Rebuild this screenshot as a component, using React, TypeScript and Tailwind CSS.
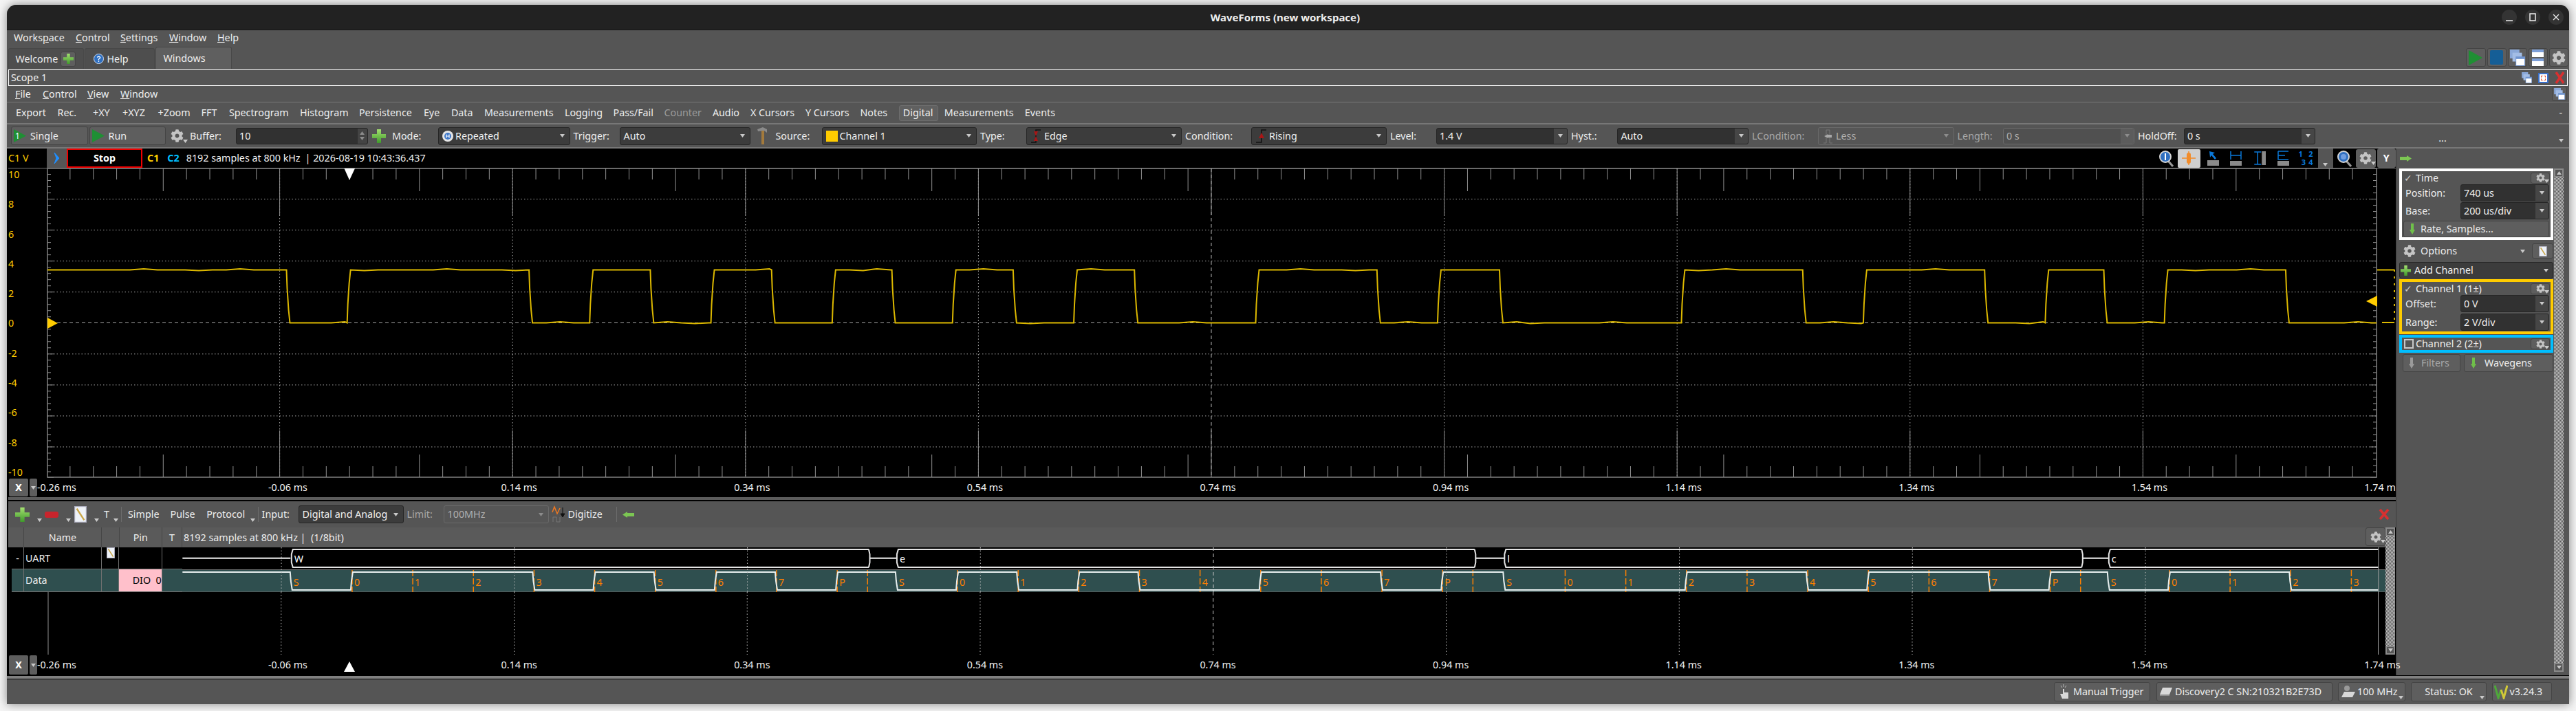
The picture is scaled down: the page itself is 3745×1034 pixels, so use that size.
import React from 'react';
import { FaCog } from 'react-icons/fa';

const BIT = 88.15;
const HIGH = 832;
const LOW = 858;
const A_HIGH = 392.5;
const A_LOW = 469.5;

const frames = [
  { ch: 'W', start: 423.5, end: 1262.7, bits: '111010101' },
  { ch: 'e', start: 1303.6, end: 2143.5, bits: '101001101' },
  { ch: 'l', start: 2187, end: 3026, bits: '001101101' },
  { ch: 'c', start: 3065.5, end: 3700, bits: '1100' },
];

// level changes of the serial line, shared by the analog trace and the digital row
const changes: { x: number; up: boolean }[] = [];
{
  let level = '1';
  frames.forEach((f) => {
    changes.push({ x: f.start, up: false });
    level = '0';
    f.bits.split('').forEach((b, i) => {
      if (b !== level) changes.push({ x: f.start + BIT * (i + 1), up: b === '1' });
      level = b;
    });
    if (level === '0') {
      level = '1';
    }
  });
}

const digitalPoints = () => {
  const pts: string[] = ['265,' + HIGH];
  changes.forEach((c) => {
    const a = c.up ? LOW : HIGH;
    const b = c.up ? HIGH : LOW;
    pts.push(`${c.x - 2},${a}`, `${c.x - 1},${(a + b) / 2}`, `${c.x + 1},${b}`);
  });
  pts.push(`3457.5,${LOW}`);
  return pts.join(' ');
};

const analogPoints = () => {
  const pts: string[] = [];
  let x = 69;
  let y = A_HIGH;
  let n = 0;
  const flat = (to: number) => {
    while (x < to - 20) {
      x += 20;
      n++;
      const bump = n % 7 === 0 ? -1.5 : n % 11 === 0 ? 1 : 0;
      pts.push(`${x},${y + bump}`);
    }
  };
  pts.push(`${x},${y}`);
  changes.forEach((c) => {
    flat(c.x - 7);
    const a = c.up ? A_LOW : A_HIGH;
    const b = c.up ? A_HIGH : A_LOW;
    pts.push(`${c.x - 7},${a}`, `${c.x - 6},${a + (b - a) * 0.35}`, `${c.x - 4},${a + (b - a) * 0.75}`, `${c.x - 2},${b}`);
    x = c.x - 2;
    y = b;
  });
  flat(3455);
  pts.push(`3455,${y}`);
  return pts.join(' ');
};

const bitTicks = frames.flatMap((f) => {
  const labels = f.bits.length === 9 ? ['S', '0', '1', '2', '3', '4', '5', '6', '7', 'P'] : ['S', '0', '1', '2', '3'];
  return labels.map((label, i) => ({ label, x: f.start + BIT * i, tick: label !== 'S' }));
});
const stopTicks = frames.slice(0, 3).map((f) => f.start + BIT * 9.5);

const majorsTop = Array.from({ length: 11 }, (_, i) => 68 + 338.6 * i);
const majorsLow = Array.from({ length: 11 }, (_, i) => 70 + 338.75 * i);

const Gear = ({ size = 18, arrow = false }: { size?: number; arrow?: boolean }) => (
  <span className="relative inline-flex shrink-0 items-center justify-center">
    <FaCog size={size} color="#c4c4c4" />
    {arrow && <Arrow className="absolute -bottom-[1px] -right-[6px]" />}
  </span>
);

const Arrow = ({ className = '', dim = false }: { className?: string; dim?: boolean }) => (
  <svg width="7" height="5" viewBox="0 0 7 5" className={`shrink-0 ${className}`}>
    <path d="M0 0 L7 0 L3.5 5 Z" fill={dim ? '#8c8c8c' : '#c8c8c8'} />
  </svg>
);

const Plus = ({ size = 20 }: { size?: number }) => (
  <svg width={size} height={size} viewBox="0 0 20 20" className="shrink-0">
    <defs>
      <linearGradient id="plusg" x1="0" y1="0" x2="0" y2="1">
        <stop offset="0" stopColor="#a4e070" />
        <stop offset="1" stopColor="#3f9a2b" />
      </linearGradient>
    </defs>
    <path d="M7 0 H13 V7 H20 V13 H13 V20 H7 V13 H0 V7 H7 Z" fill="url(#plusg)" />
  </svg>
);

const Play = ({ w = 18, h = 19 }: { w?: number; h?: number }) => (
  <svg width={w} height={h} viewBox="0 0 18 19" className="shrink-0" preserveAspectRatio="none">
    <path d="M0 0 L18 9.5 L0 19 Z" fill="#1f8f34" />
  </svg>
);

const DownArrow = ({ dim = false }: { dim?: boolean }) => (
  <svg width="8" height="16" viewBox="0 0 8 16" className="shrink-0">
    <path d="M2 0 H6 V9 H8 L4 16 L0 9 H2 Z" fill={dim ? '#9a9a9a' : '#6fbf4a'} />
  </svg>
);

const SideArrow = ({ left = false }: { left?: boolean }) => (
  <svg width="18" height="9" viewBox="0 0 18 9" className={`shrink-0 ${left ? 'rotate-180' : ''}`}>
    <path d="M1 2 H11 V0 L18 4.5 L11 9 V7 H1 Z" fill="#7cc653" />
  </svg>
);

const Windows = ({ w = 16, h = 18 }: { w?: number; h?: number }) => (
  <svg width={w} height={h} viewBox="0 0 24 26" className="shrink-0">
    <rect x="0" y="0" width="15" height="14" fill="#8aa8d8" />
    <rect x="4" y="5" width="15" height="14" fill="#a3bde5" />
    <rect x="9" y="11" width="15" height="15" fill="#6f94cf" />
    <rect x="10" y="15" width="13" height="10" fill="#fff" />
  </svg>
);

const Doc = ({ w = 15, h = 20 }: { w?: number; h?: number }) => (
  <svg width={w} height={h} viewBox="0 0 15 20" className="shrink-0">
    <rect x="0.5" y="0.5" width="14" height="19" fill="#eef2f8" stroke="#aab" />
    <path d="M3 3 L12 17" stroke="#c9a64a" strokeWidth="2" />
  </svg>
);

const Mag = ({ digit = false }: { digit?: boolean }) => (
  <svg width="21" height="25" viewBox="0 0 21 25" className="shrink-0">
    <path d="M13 16 L20 24" stroke="#9a9a9a" strokeWidth="3" />
    <circle cx="9" cy="10" r="8" fill="#2f6fc0" stroke="#d5d5d5" strokeWidth="2" />
    {digit ? <path d="M9 5 V15" stroke="#fff" strokeWidth="2" /> : <circle cx="9" cy="10" r="4" fill="#6f9de0" />}
  </svg>
);

const Mn = ({ a = '', u, b = '' }: { a?: string; u: string; b?: string }) => (
  <span>
    {a}
    <span className="underline">{u}</span>
    {b}
  </span>
);

const Label = ({ children, className = '', dim = false }: { children: React.ReactNode; className?: string; dim?: boolean }) => (
  <div className={`shrink-0 pl-[5px] ${dim ? 'text-[#a8a8a8]' : 'text-[#eeeeee]'} ${className}`}>{children}</div>
);

const Field = ({ value, className = '', dim = false, spin = false }: { value: string; className?: string; dim?: boolean; spin?: boolean }) => (
  <div className={`flex h-[24px] shrink-0 items-stretch overflow-hidden rounded-[3px] border ${dim ? 'border-[#6a6a6a] bg-[#505050] text-[#b0b0b0]' : 'border-[#262626] bg-[#313131] text-[#f0f0f0]'} ${className}`}>
    <div className="flex flex-1 items-center pl-[4px]">{value}</div>
    {spin ? (
      <div className="flex w-[14px] flex-col items-center justify-center gap-[3px] bg-[#444444]">
        <Arrow className="rotate-180" dim />
        <Arrow dim />
      </div>
    ) : (
      <div className={`flex w-[19px] items-center justify-center ${dim ? 'bg-[#5c5c5c]' : 'bg-[#464646]'}`}>
        <Arrow dim={dim} />
      </div>
    )}
  </div>
);

const Select = ({ value, icon, className = '', dim = false }: { value: string; icon?: React.ReactNode; className?: string; dim?: boolean }) => (
  <div className={`flex h-[26px] shrink-0 items-center gap-[3px] rounded-[3px] border pl-[5px] pr-[7px] ${dim ? 'border-[#6a6a6a] bg-[#565656] text-[#b0b0b0]' : 'border-[#262626] bg-[#3c3c3c] text-[#f0f0f0]'} ${className}`}>
    {icon}
    <span className="flex-1 whitespace-nowrap">{value}</span>
    <Arrow dim={dim} />
  </div>
);

const Btn = ({ children, className = '' }: { children?: React.ReactNode; className?: string }) => (
  <div className={`flex shrink-0 items-center rounded-[3px] border border-[#444444] bg-[#5e5e5e] ${className}`}>{children}</div>
);

const Scrollbar = ({ className = '' }: { className?: string }) => (
  <div className={`flex w-[14px] shrink-0 flex-col ${className}`}>
    <div className="flex h-[13px] items-center justify-center border-2 border-[#8a8a8a] bg-[#555555]">
      <Arrow className="rotate-180" />
    </div>
    <div className="flex-1 bg-[repeating-conic-gradient(#cccccc_0%_25%,#555555_0%_50%)] bg-[length:2px_2px]" />
    <div className="flex h-[13px] items-center justify-center border-2 border-[#8a8a8a] bg-[#555555]">
      <Arrow />
    </div>
  </div>
);

const TimeAxis = () => {
  const labels = ['0.14 ms', '0.34 ms', '0.54 ms', '0.74 ms', '0.94 ms', '1.14 ms', '1.34 ms', '1.54 ms', '1.74 ms'];
  return (
    <div className="flex flex-1 items-center overflow-hidden whitespace-nowrap text-[#f2f2f2]">
      <div className="w-[336px] shrink-0">-0.26 ms</div>
      <div className="w-[338.6px] shrink-0">-0.06 ms</div>
      {labels.map((l) => (
        <div key={l} className="w-[338.6px] shrink-0">
          {l}
        </div>
      ))}
    </div>
  );
};

const XButton = () => (
  <div className="flex w-[42px] shrink-0 items-stretch self-stretch py-[1px] pl-[1px]">
    <div className="flex w-[28px] items-center justify-center rounded-[2px] bg-[#5e5e5e] font-bold text-white">X</div>
    <div className="ml-[2px] flex w-[11px] items-center justify-center rounded-[2px] bg-[#5e5e5e]">
      <Arrow />
    </div>
  </div>
);

const Plot = () => {
  const yTicks = Array.from({ length: 51 }, (_, i) => 244.5 + 9.01 * i);
  const smallX = Array.from({ length: 101 }, (_, i) => 68 + 33.86 * i).filter((_, i) => i % 10 !== 0);
  return (
    <svg viewBox="68 245 3416 450" className="h-[450px] w-[3416px] shrink-0">
      <path d="M69 245 H3455 V694 H69 Z" fill="none" stroke="#808080" strokeWidth="1.5" />
      {[1, 2, 3, 4, 6, 7, 8, 9].map((i) => (
        <line key={i} x1="69" x2="3455" y1={244.5 + 45.05 * i} y2={244.5 + 45.05 * i} stroke="#a8a8a8" strokeDasharray="1.5 3" />
      ))}
      <line x1="83" x2="3440" y1="469.5" y2="469.5" stroke="#a8a8a8" strokeDasharray="5 4" />
      {majorsTop.slice(1, 10).map((x, i) => (
        <g key={x}>
          <line x1={x} x2={x} y1="245" y2="694" stroke="#b0b0b0" strokeDasharray={i === 4 ? '5 4' : '1.5 3'} />
          <line x1={x} x2={x} y1="245" y2="313" stroke="#909090" />
          <line x1={x} x2={x} y1="626" y2="694" stroke="#909090" />
        </g>
      ))}
      {smallX.map((x, i) => {
        const len = (i + 1) % 10 === 5 ? 33 : 16;
        return (
          <g key={x} stroke="#909090">
            <line x1={x} x2={x} y1="245" y2={245 + len} />
            <line x1={x} x2={x} y1="694" y2={694 - len} />
          </g>
        );
      })}
      {yTicks.map((y, i) => (
        <g key={y} stroke="#909090">
          <line x1="69" x2={i % 5 === 0 ? 78 : 74} y1={y} y2={y} />
          <line x1="3455" x2={i % 5 === 0 ? 3446 : 3450} y1={y} y2={y} />
        </g>
      ))}
      <polyline points={analogPoints()} fill="none" stroke="#dcb800" strokeWidth="2" />
      <path d="M3456 392.5 H3481 M3463 469 H3481" stroke="#dcb800" strokeWidth="2" fill="none" />
      <line x1="3481" x2="3481" y1="392" y2="470" stroke="#dcb800" strokeWidth="2" strokeDasharray="3 7" />
      <path d="M69 462 L84 470 L69 478 Z" fill="#ffcc00" />
      <path d="M3440 438 L3456 430 V446 Z" fill="#ffcc00" />
      <path d="M500.5 245 H516 L508 262 Z" fill="#ffffff" />
    </svg>
  );
};

const DigitalRows = () => (
  <svg viewBox="264.7 796 3203.3 65" className="h-[65px] w-[3203.3px] shrink-0">
    <rect x="264.7" y="828" width="3204" height="33" fill="#2f4f4f" />
    <path d="M264.7 828.5 H3468 M264.7 861 H3468" stroke="#707070" />
    <line x1="265" x2="422" y1="811.7" y2="811.7" stroke="#f0f0f0" strokeWidth="2" />
    {frames.map((f, i) => {
      const next = frames[i + 1];
      const end = Math.min(f.end, 3457.5);
      return (
        <g key={f.ch}>
          <path
            d={`M${end} 799 H${f.start + 2} L${f.start} 806 V818 L${f.start + 2} 825 H${end}${f.end < 3457 ? ` M${end} 799 L${end + 1.5} 806 V818 L${end} 825` : ''}`}
            fill="none"
            stroke="#e4e4e4"
            strokeWidth="2"
          />
          {next && <line x1={f.end + 1.5} x2={next.start} y1="811.7" y2="811.7" stroke="#f0f0f0" strokeWidth="2" />}
          <text x={f.start + 4} y="818" fontSize="14.3" fill="#ffffff">
            {f.ch}
          </text>
        </g>
      );
    })}
    {bitTicks.map((t) => (
      <g key={t.x}>
        {t.tick && <line x1={t.x} x2={t.x} y1="829" y2="861" stroke="#ff8000" strokeWidth="1.5" strokeDasharray="9 3" />}
        <text x={t.x + 3} y="852" fontSize="14.3" fill="#ff8000">
          {t.label}
        </text>
      </g>
    ))}
    {stopTicks.map((x) => (
      <line key={x} x1={x} x2={x} y1="829" y2="861" stroke="#ff8000" strokeWidth="1.5" strokeDasharray="9 3" />
    ))}
    <polyline points={digitalPoints()} fill="none" stroke="#e6eeee" strokeWidth="2" />
    {majorsLow.slice(1, 10).map((x, i) => (
      <line key={x} x1={x} x2={x} y1="796" y2="861" stroke="#c0c0c0" strokeDasharray={i === 4 ? '5 4' : '1.5 3'} />
    ))}
    <line x1="3457.5" x2="3457.5" y1="796" y2="861" stroke="#a0a0a0" />
  </svg>
);

const LowerCanvas = () => (
  <svg viewBox="12 861 3456 91" className="h-[91px] w-[3456px] shrink-0">
    <line x1="70" x2="70" y1="861" y2="952" stroke="#909090" />
    <line x1="3457.5" x2="3457.5" y1="861" y2="952" stroke="#a0a0a0" />
    {majorsLow.slice(1, 10).map((x, i) => (
      <line key={x} x1={x} x2={x} y1="861" y2="952" stroke="#c0c0c0" strokeDasharray={i === 4 ? '5 4' : '1.5 3'} />
    ))}
  </svg>
);

const TimeBoxRow = ({ label, value }: { label: string; value: string }) => (
  <div className="flex h-[25px] items-center">
    <div className="w-[85px] pl-[5px] text-[#eeeeee]">{label}</div>
    <Field value={value} className="!h-[25px] w-[129px]" />
  </div>
);

const BoxTitle = ({ children, checked = true, className = '' }: { children: React.ReactNode; checked?: boolean; className?: string }) => (
  <div className={`flex items-center ${className}`}>
    <div className="flex w-[20px] shrink-0 items-center pl-[3px] text-[#cccccc]">
      {checked ? '✓' : <div className="h-[14px] w-[14px] border-2 border-[#c8c8c8]" />}
    </div>
    <div className="flex-1 text-[#eeeeee]">{children}</div>
    <Btn className="mr-[1px] h-[16px] w-[28px] justify-center">
      <Gear size={13} arrow />
    </Btn>
  </div>
);

const Sidebar = () => (
  <div className="flex w-[250px] shrink-0 border-l border-[#3c3c3c] bg-[#555555]">
    <div className="flex w-[229px] shrink-0 flex-col pl-[4px]">
      <div className="flex h-[29px] items-center">
        <SideArrow />
      </div>
      <div className="flex h-[104px] w-[224px] flex-col border-4 border-white bg-[#555555]">
        <BoxTitle className="h-[19px]">Time</BoxTitle>
        <TimeBoxRow label="Position:" value="740 us" />
        <div className="mt-[1px]">
          <TimeBoxRow label="Base:" value="200 us/div" />
        </div>
        <Btn className="ml-[2px] mt-[2px] h-[24px] w-[212px] gap-[8px] pl-[8px] text-[#eeeeee]">
          <DownArrow />
          Rate, Samples...
        </Btn>
      </div>
      <div className="flex h-[32px] w-[224px] items-center pl-[6px] text-[#eeeeee]">
        <Gear size={18} />
        <span className="ml-[7px] flex-1">Options</span>
        <Arrow className="mr-[10px]" />
        <Btn className="h-[22px] w-[31px] justify-center">
          <Doc w={12} h={15} />
        </Btn>
      </div>
      <div className="flex h-[24px] w-[224px] items-center gap-[5px] rounded-[3px] border border-[#262626] bg-[#3c3c3c] pl-[1px] pr-[6px] text-[#f0f0f0]">
        <Plus size={15} />
        <span className="flex-1">Add Channel</span>
        <Arrow />
      </div>
      <div className="mt-[1px] flex h-[80px] w-[224px] flex-col border-4 border-[#ffcc00]">
        <BoxTitle className="h-[19px]">Channel 1 (1±)</BoxTitle>
        <TimeBoxRow label="Offset:" value="0 V" />
        <div className="mt-[2px]">
          <TimeBoxRow label="Range:" value="2 V/div" />
        </div>
      </div>
      <div className="mt-[1px] w-[224px] border-4 border-[#00bfff]">
        <BoxTitle checked={false} className="h-[18px]">
          Channel 2 (2±)
        </BoxTitle>
      </div>
      <div className="mt-[2px] flex w-[224px] items-center pl-[5px]">
        <Btn className="h-[26px] w-[84px] gap-[10px] pl-[8px] text-[#a8a8a8]">
          <DownArrow dim />
          Filters
        </Btn>
        <Btn className="ml-[5px] h-[26px] w-[130px] gap-[12px] pl-[9px] text-[#eeeeee]">
          <DownArrow />
          Wavegens
        </Btn>
      </div>
    </div>
    <div className="flex w-[21px] flex-col pb-[5px] pt-[29px]">
      <Scrollbar className="flex-1" />
    </div>
  </div>
);

const ScopeToolbar = () => {
  const items: [string, string][] = [
    ['Export', 'w-[60.5px]'],
    ['Rec.', 'w-[51.5px]'],
    ['+XY', 'w-[43px]'],
    ['+XYZ', 'w-[51.6px]'],
    ['+Zoom', 'w-[63px]'],
    ['FFT', 'w-[40.3px]'],
    ['Spectrogram', 'w-[103px]'],
    ['Histogram', 'w-[86px]'],
    ['Persistence', 'w-[94px]'],
    ['Eye', 'w-[40px]'],
    ['Data', 'w-[48px]'],
    ['Measurements', 'w-[117px]'],
    ['Logging', 'w-[70.6px]'],
    ['Pass/Fail', 'w-[74px]'],
    ['Counter', 'w-[70.4px] text-[#9a9a9a]'],
    ['Audio', 'w-[55px]'],
    ['X Cursors', 'w-[80px]'],
    ['Y Cursors', 'w-[79.6px]'],
    ['Notes', 'w-[56.4px]'],
  ];
  return (
    <div className="flex h-[32px] shrink-0 items-center border-b-2 border-[#777777] pl-[13px] text-[#eeeeee]">
      {items.map(([t, w]) => (
        <div key={t} className={`shrink-0 whitespace-nowrap ${w}`}>
          {t}
        </div>
      ))}
      <div className="flex h-[23px] w-[57px] shrink-0 items-center rounded-[3px] border border-[#6e6e6e] bg-[#606060] pl-[5px]">Digital</div>
      <div className="ml-[9px] w-[117px] shrink-0">Measurements</div>
      <div className="shrink-0">Events</div>
      <div className="flex-1" />
      <div className="mr-[10px]">-</div>
    </div>
  );
};

const ControlsRow = () => (
  <div className="flex h-[35px] shrink-0 items-center border-b-2 border-[#777777] pl-[6px] text-[#eeeeee]">
    <Btn className="h-[27px] w-[111.5px] pl-[3px]">
      <span className="relative flex items-center">
        <Play />
        <span className="absolute left-[2px] text-[12px] text-white">1</span>
      </span>
      <span className="ml-[6px]">Single</span>
    </Btn>
    <Btn className="ml-[2px] h-[27px] w-[111px] pl-[3px]">
      <Play />
      <span className="ml-[6px]">Run</span>
    </Btn>
    <div className="ml-[6.5px] flex w-[21px] shrink-0 justify-center">
      <Gear size={19} arrow />
    </div>
    <Label className="ml-[3px] w-[72px]">Buffer:</Label>
    <Field value="10" spin className="w-[191.5px]" />
    <div className="ml-[6.5px] shrink-0">
      <Plus size={20} />
    </div>
    <Label className="ml-[4px] w-[72px]">Mode:</Label>
    <Select
      className="w-[191.5px]"
      value="Repeated"
      icon={
        <svg width="16" height="16" viewBox="0 0 16 16" className="shrink-0">
          <circle cx="8" cy="8" r="8" fill="#e6e6e6" />
          <circle cx="8" cy="8" r="5" fill="#3f78c8" />
          <path d="M6 5.5 V10.5 M10 5.5 V10.5 M6 8 H10" stroke="#fff" strokeWidth="1.2" />
        </svg>
      }
    />
    <Label className="w-[72px]">Trigger:</Label>
    <Select className="w-[190.5px]" value="Auto" />
    <div className="ml-[8px] flex w-[17px] shrink-0 justify-center">
      <svg width="17" height="25" viewBox="0 0 17 25">
        <path d="M2 3 L10 0 L16 3 L16 8 L12 5 L3 6 Z" fill="#8a8a8a" />
        <rect x="8" y="5" width="4" height="20" fill="#a37a3c" />
      </svg>
    </div>
    <Label className="ml-[6.5px] w-[72px]">Source:</Label>
    <Select className="w-[225.5px]" value="Channel 1" icon={<span className="h-[16px] w-[17px] shrink-0 bg-[#ffcc00]" />} />
    <Label className="w-[72px]">Type:</Label>
    <Select
      className="w-[226px]"
      value="Edge"
      icon={
        <svg width="17" height="20" viewBox="0 0 17 20" className="shrink-0">
          <path d="M1 19 H8 V1 H15" stroke="#111" fill="none" strokeWidth="1.5" />
          <path d="M5 3 H11 L8 10 L11 17 H5 L8 10 Z" fill="#a81616" />
        </svg>
      }
    />
    <Label className="w-[101px]">Condition:</Label>
    <Select
      className="w-[197px]"
      value="Rising"
      icon={
        <svg width="17" height="20" viewBox="0 0 17 20" className="shrink-0">
          <path d="M1 19 H9 V1 H16" stroke="#111" fill="none" strokeWidth="1.5" />
          <path d="M9 5 L13 13 H5 Z" fill="#a81616" />
        </svg>
      }
    />
    <Label className="w-[72px]">Level:</Label>
    <Field value="1.4 V" className="w-[191px]" />
    <Label className="w-[72.4px]">Hyst.:</Label>
    <Field value="Auto" className="w-[190.6px]" />
    <Label dim className="w-[101px]">
      LCondition:
    </Label>
    <Select
      dim
      className="w-[197.6px]"
      value="Less"
      icon={
        <svg width="17" height="22" viewBox="0 0 17 22" className="shrink-0">
          <path d="M2 21 H6 V2 H11 V21 H15" stroke="#777" fill="none" />
          <path d="M3 11 L9 8 V14 Z M9 9 H14 V13 H9 Z" fill="#a8a8a8" />
        </svg>
      }
    />
    <Label dim className="w-[71.4px]">
      Length:
    </Label>
    <Field dim value="0 s" className="w-[191px]" />
    <Label className="w-[72px]">HoldOff:</Label>
    <Field value="0 s" className="w-[191px]" />
    <div className="flex-1 pl-[16px] pt-[6px] text-center">...</div>
    <Arrow className="mb-[-14px] mr-[8px]" />
  </div>
);

const ScopeHeader = () => (
  <div className="flex h-[29px] items-stretch border-b border-[#777777] bg-black">
    <div className="flex w-[56px] shrink-0 items-center text-[#ffcc00]">C1 V</div>
    <div className="flex w-[29px] shrink-0 items-center justify-center bg-[#555555]">
      <svg width="10" height="18" viewBox="0 0 10 18">
        <path d="M1 1 L8 9 L1 17 L4 9 Z" fill="#1f8fff" stroke="#1f8fff" />
      </svg>
    </div>
    <div className="flex w-[110px] shrink-0 items-center justify-center border-2 border-[#f00000] font-bold text-white">Stop</div>
    <div className="ml-[7px] flex items-center whitespace-nowrap text-[#f0f0f0]">
      <span className="font-bold text-[#ffcc00]">C1</span>
      <span className="ml-[12px] font-bold text-[#00bfff]">C2</span>
      <span className="ml-[10px]">8192 samples at 800 kHz</span>
      <span className="ml-[7px]">| 2026-08-19 10:43:36.437</span>
    </div>
    <div className="flex-1" />
    <div className="flex items-center">
      <Mag digit />
      <div className="ml-[6px] flex h-[27px] w-[33.5px] items-center justify-center rounded-[2px] bg-[#cfcfcf]">
        <svg width="22" height="22" viewBox="0 0 22 22">
          <path d="M11 1 V21 M1 11 H21" stroke="#f28c2a" strokeWidth="1.5" />
          <rect x="8" y="3" width="6" height="16" rx="3" fill="#f28c2a" />
        </svg>
      </div>
      <svg width="17" height="22" viewBox="0 0 17 22" className="ml-[9.5px]">
        <path d="M3 1 L4 10 L6 7 L11 13 L13 11 L8 5 L11 3 Z" fill="#0a78d8" />
        <rect x="0" y="14" width="17" height="8" fill="#8a8a8a" />
      </svg>
      <svg width="17" height="22" viewBox="0 0 17 22" className="ml-[16px]">
        <path d="M1 1 V13 M16 1 V13 M1 7 H16" stroke="#0a78d8" strokeWidth="1.5" />
        <rect x="0" y="15" width="17" height="7" fill="#8a8a8a" />
      </svg>
      <svg width="19.5" height="22" viewBox="0 0 19 22" className="ml-[16px]">
        <path d="M2 2 H12 M2 20 H12 M7 2 V20" stroke="#0a78d8" strokeWidth="1.5" />
        <rect x="13" y="1" width="6" height="20" fill="#8a8a8a" />
      </svg>
      <svg width="17" height="22" viewBox="0 0 17 22" className="ml-[16.5px]">
        <path d="M1 1 V13 H16 M1 1 H16 M1 7 H11" stroke="#0a78d8" strokeWidth="1.5" fill="none" />
        <rect x="0" y="15" width="17" height="7" fill="#8a8a8a" />
      </svg>
      <div className="ml-[14px] grid h-[24px] w-[21px] shrink-0 grid-cols-2 text-[11px] leading-[12px] font-bold text-[#0a78d8]">
        <span>1</span>
        <span className="text-right">2</span>
        <span className="text-right">3</span>
        <span className="text-right">4</span>
      </div>
      <div className="ml-[7px] flex h-full w-[22px] items-end justify-center bg-[#555555] pb-[2px]">
        <Arrow />
      </div>
      <div className="ml-[6px]">
        <Mag />
      </div>
      <Btn className="ml-[6.5px] h-[27px] w-[28.5px] justify-center border-transparent">
        <Gear size={18} arrow />
      </Btn>
      <Btn className="ml-[2px] h-[28px] w-[27.5px] justify-center border-transparent font-bold text-white">Y</Btn>
    </div>
  </div>
);

const LowerToolbar = () => (
  <div className="flex h-[38px] items-center pl-[10px] text-[#eeeeee]">
    <Plus size={21} />
    <Arrow className="ml-[11px] mt-[16px]" />
    <svg width="20" height="9" viewBox="0 0 20 9" className="ml-[4px] shrink-0">
      <rect width="20" height="9" rx="3" fill="#c8242c" />
    </svg>
    <Arrow className="ml-[11px] mt-[16px]" />
    <div className="ml-[5px]">
      <Doc w={18} h={24} />
    </div>
    <Arrow className="ml-[11px] mt-[16px]" />
    <span className="ml-[7px] w-[14px]">T</span>
    <Arrow className="mt-[16px]" />
    <div className="ml-[4px] h-[22px] w-px bg-[#6c6c6c]" />
    <span className="ml-[9px] w-[61.6px] shrink-0">Simple</span>
    <span className="w-[52.6px] shrink-0">Pulse</span>
    <span className="w-[63.4px] shrink-0">Protocol</span>
    <Arrow className="mt-[16px]" />
    <div className="ml-[4px] h-[22px] w-px bg-[#6c6c6c]" />
    <span className="ml-[5px] w-[53px] shrink-0">Input:</span>
    <Select className="w-[153px]" value="Digital and Analog" />
    <Label dim className="w-[58px]">
      Limit:
    </Label>
    <Select dim className="w-[153px]" value="100MHz" />
    <svg width="22" height="26" viewBox="0 0 22 26" className="ml-[4px] shrink-0">
      <path d="M1 10 L4 2 L8 12 L12 4" stroke="#f07820" fill="none" strokeWidth="1.5" />
      <path d="M2 24 V17 H7 V24 H12 V17" stroke="#777" fill="none" />
      <path d="M16 3 V15 M13 12 L16 17 L19 12 Z" stroke="#111" fill="#111" />
    </svg>
    <span className="ml-[2px] w-[70px] shrink-0">Digitize</span>
    <div className="h-[22px] w-px bg-[#6c6c6c]" />
    <div className="ml-[8px]">
      <SideArrow left />
    </div>
    <div className="flex-1" />
    <svg width="16" height="18" viewBox="0 0 16 18" className="mr-[9px] shrink-0">
      <path d="M2 2 L14 16 M14 2 L2 16" stroke="#d83030" strokeWidth="3.5" />
    </svg>
  </div>
);

const cellHead = 'flex items-center justify-center border-r border-[#464646]';

const LowerTable = () => (
  <div className="flex h-[185px] bg-black">
    <div className="flex w-[3456px] shrink-0 flex-col">
      <div className="flex h-[29px] items-stretch bg-[#5a5a5a] pl-[2px] text-[#eeeeee]">
        <div className={`w-[21px] ${cellHead}`} />
        <div className={`w-[113px] ${cellHead}`}>Name</div>
        <div className={`w-[25.5px] ${cellHead}`} />
        <div className={`w-[62.5px] ${cellHead}`}>Pin</div>
        <div className={`w-[29px] ${cellHead}`}>T</div>
        <div className="flex flex-1 items-center pl-[2px]">8192 samples at 800 kHz |&nbsp;&nbsp;(1/8bit)</div>
        <Btn className="h-[27px] w-[29px] justify-center">
          <Gear size={16} arrow />
        </Btn>
      </div>
      <div className="flex h-[65px]">
        <div className="flex w-[252.7px] shrink-0 flex-col pl-[5px] text-[#eeeeee]">
          <div className="flex h-[32px] items-stretch border-b border-[#707070]">
            <div className="flex w-[18px] items-center justify-center border-r border-[#707070]">-</div>
            <div className="flex w-[113px] items-center border-r border-[#707070] pl-[2px]">UART</div>
            <div className="w-[25.5px] border-r border-[#707070] pl-[7px]">
              <Doc w={12} h={16} />
            </div>
            <div className="w-[62.5px] border-r border-[#707070]" />
            <div className="w-[29px]" />
          </div>
          <div className="flex h-[33px] items-stretch border-b border-[#707070] bg-[#2f4f4f]">
            <div className="w-[18px] border-r border-[#707070]" />
            <div className="flex w-[113px] items-center border-r border-[#707070] pl-[2px]">Data</div>
            <div className="w-[25.5px] border-r border-[#707070]" />
            <div className="flex w-[62.5px] items-center justify-end whitespace-pre border-r border-[#707070] bg-[#ffc0cb] text-black">DIO  0</div>
            <div className="w-[29px]" />
          </div>
        </div>
        <DigitalRows />
      </div>
      <LowerCanvas />
    </div>
    <Scrollbar />
  </div>
);

const StatusBar = () => (
  <div className="flex h-[36px] shrink-0 items-center justify-end pr-[25px] text-[#eeeeee]">
    <Btn className="h-[28px] w-[140px] gap-[5px] pl-[7px]">
      <svg width="15" height="24" viewBox="0 0 15 24" className="shrink-0">
        <path d="M5 8 H7 V13 H13 V22 H4 L1 15 L5 15 Z" fill="#d8d8d8" />
        <path d="M6 1 V5 M2 3 L4 6 M10 3 L8 6" stroke="#bcbcbc" />
      </svg>
      Manual Trigger
    </Btn>
    <Btn className="ml-[9px] h-[28px] w-[256px] gap-[3px] pl-[3px]">
      <svg width="20" height="14" viewBox="0 0 20 14" className="shrink-0">
        <path d="M5 1 H19 L15 11 H1 Z" fill="#d8d8d8" />
        <path d="M1 11 H15 V13 H1 Z" fill="#8e8e8e" />
      </svg>
      Discovery2 C SN:210321B2E73D
    </Btn>
    <Btn className="relative ml-[8px] h-[28px] w-[98px] gap-[2px] pl-[3px]">
      <svg width="22" height="22" viewBox="0 0 22 22" className="shrink-0">
        <path d="M5 11 H21 L17 19 H1 Z" fill="#d8d8d8" />
        <circle cx="9" cy="6" r="4" fill="#9a9a9a" />
      </svg>
      100 MHz
      <Arrow className="absolute bottom-[2px] right-[2px]" />
    </Btn>
    <Btn className="relative ml-[8px] h-[28px] w-[110px] justify-center">
      Status: OK
      <Arrow className="absolute bottom-[2px] right-[2px]" />
    </Btn>
    <Btn className="ml-[7.5px] h-[28px] w-[87.5px] gap-[3px] pl-[2px]">
      <svg width="20" height="22" viewBox="0 0 20 22" className="shrink-0">
        <path d="M1 2 L6 20 L10 8" stroke="#4ea83a" strokeWidth="3" fill="none" />
        <path d="M10 8 L14 20 L19 2" stroke="#d0c838" strokeWidth="3" fill="none" />
      </svg>
      v3.24.3
    </Btn>
  </div>
);

export default function App() {
  return (
    <div className="h-[1034px] w-[3745px] overflow-hidden bg-[#f4f4f4] pl-[10px] pr-[10px] pt-[7px] text-[14.3px] leading-[18px] [font-family:'Noto_Sans',sans-serif]">
      <div className="flex h-[1017px] w-[3725px] flex-col overflow-hidden rounded-t-[14px] bg-[#555555] shadow-[0_0_14px_rgba(0,0,0,0.45)]">
        <div className="flex h-[37px] shrink-0 items-center border-b border-[#151515] bg-[#222222]">
          <div className="flex-1" />
          <div className="text-[15px] font-bold text-[#eeeeee]">WaveForms (new workspace)</div>
          <div className="flex flex-1 justify-end gap-[12px] pr-[8px]">
            {[
              <path key="a" d="M6 16 H16" stroke="#eee" strokeWidth="1.5" />,
              <rect key="b" x="7" y="6" width="8" height="10" fill="none" stroke="#eee" strokeWidth="1.5" />,
              <path key="c" d="M7 7 L15 15 M15 7 L7 15" stroke="#eee" strokeWidth="1.3" />,
            ].map((g, i) => (
              <svg key={i} width="22" height="22" viewBox="0 0 22 22">
                <circle cx="11" cy="11" r="11" fill="#343434" />
                {g}
              </svg>
            ))}
          </div>
        </div>

        <div className="flex h-[22px] shrink-0 items-center pl-[10px] text-[#eeeeee]">
          <div className="w-[90px]">
            <Mn a="Works" u="p" b="ace" />
          </div>
          <div className="w-[65px]">
            <Mn u="C" b="ontrol" />
          </div>
          <div className="w-[71px]">
            <Mn u="S" b="ettings" />
          </div>
          <div className="w-[70px]">
            <Mn u="W" b="indow" />
          </div>
          <div>
            <Mn u="H" b="elp" />
          </div>
        </div>

        <div className="flex h-[34px] shrink-0 items-end pl-[1.5px] text-[#eeeeee]">
          <div className="flex h-[30px] w-[110px] items-center rounded-t-[3px] border border-b-0 border-[#484848] bg-[#4e4e4e] pl-[10px]">
            Welcome
            <Btn className="ml-[4px] h-[22px] w-[22px] justify-center">
              <Plus size={15} />
            </Btn>
          </div>
          <div className="ml-[1px] flex h-[30px] w-[102px] items-center gap-[5px] rounded-t-[3px] border border-b-0 border-[#484848] bg-[#4e4e4e] pl-[12px]">
            <svg width="15" height="15" viewBox="0 0 15 15" className="shrink-0">
              <circle cx="7.5" cy="7.5" r="7" fill="#2f6fc0" stroke="#cfdcf0" />
              <path d="M5.3 5.5 Q7.5 3 9.7 5.5 Q9.7 7 7.5 8 V9.5 M7.5 10.5 V12" stroke="#fff" fill="none" strokeWidth="1.3" />
            </svg>
            Help
          </div>
          <div className="ml-[1px] flex h-[32px] w-[111px] items-center rounded-t-[3px] border border-b-0 border-[#484848] bg-[#5f5f5f] pl-[11px]">Windows</div>
          <div className="flex-1" />
          <div className="mb-[3px] mr-[1.5px] flex gap-[2px]">
            <Btn className="h-[27px] w-[29px] justify-center">
              <Play w={20} h={22} />
            </Btn>
            <Btn className="h-[27px] w-[28px] justify-center">
              <div className="h-[21px] w-[19px] rounded-[2px] bg-[#155e96]" />
            </Btn>
            <Btn className="h-[27px] w-[28px] justify-center">
              <Windows w={22} h={24} />
            </Btn>
            <Btn className="h-[27px] w-[28px] justify-center">
              <div className="flex h-[24px] w-[17px] flex-col gap-[2px]">
                <div className="flex-1 border-t-[4px] border-[#7d9fd8] bg-white" />
                <div className="flex-1 border-t-[4px] border-[#7d9fd8] bg-white" />
              </div>
            </Btn>
            <Btn className="h-[27px] w-[28px] justify-center">
              <Gear size={20} />
            </Btn>
          </div>
        </div>

        <div className="mx-[2px] mt-[1px] flex h-[24px] shrink-0 items-center justify-end border border-white pl-[3px] pr-[3px] text-[#eeeeee]">
          <span className="flex-1">Scope 1</span>
          <Windows w={15} h={16} />
          <div className="ml-[9px] flex h-[15px] w-[15px] shrink-0 items-center justify-center border-2 border-[#3a6fc8] bg-white">
            <div className="h-[7px] w-[7px] border border-dashed border-[#e05030]" />
          </div>
          <svg width="15" height="18" viewBox="0 0 15 18" className="ml-[9px] shrink-0">
            <path d="M2 1 L13 17 M13 1 L2 17" stroke="#d83030" strokeWidth="3.5" />
          </svg>
        </div>

        <div className="flex h-[24px] shrink-0 items-center border-b border-[#777777] pl-[12px] pr-[3px] text-[#eeeeee]">
          <div className="w-[40px]">
            <Mn u="F" b="ile" />
          </div>
          <div className="w-[65px]">
            <Mn u="C" b="ontrol" />
          </div>
          <div className="w-[48px]">
            <Mn u="V" b="iew" />
          </div>
          <div className="flex-1">
            <Mn u="W" b="indow" />
          </div>
          <Btn className="h-[21px] w-[22px] justify-center">
            <Windows w={16} h={17} />
          </Btn>
        </div>

        <ScopeToolbar />
        <ControlsRow />

        <div className="flex h-[766px] shrink-0">
          <div className="flex w-[3473px] shrink-0 flex-col bg-black pl-[2px]">
            <ScopeHeader />
            <div className="flex h-[450px] shrink-0">
              <div className="w-[56px] shrink-0 text-[#ffcc00]">
                {['10', '8', '6', '4', '2', '0', '-2', '-4', '-6', '-8', '-10'].map((l) => (
                  <div key={l} className="h-[43.3px] leading-[18px]">
                    {l}
                  </div>
                ))}
              </div>
              <Plot />
            </div>
            <div className="flex h-[28px] shrink-0">
              <XButton />
              <TimeAxis />
            </div>
            <div className="h-[6px] shrink-0 border-b-2 border-black bg-[#5c5c5c]" />
            <div className="bg-[#555555]">
              <LowerToolbar />
            </div>
            <LowerTable />
            <div className="flex h-[30px] shrink-0">
              <XButton />
              <div className="relative flex flex-1">
                <TimeAxis />
                <svg width="16" height="15" viewBox="0 0 16 15" className="absolute left-[446px] top-[10px]">
                  <path d="M8 0 L16 15 H0 Z" fill="#ffffff" />
                </svg>
              </div>
            </div>
          </div>
          <Sidebar />
        </div>

        <div className="h-[6px] shrink-0 border-y border-black bg-[#808080]" />
        <StatusBar />
      </div>
    </div>
  );
}
